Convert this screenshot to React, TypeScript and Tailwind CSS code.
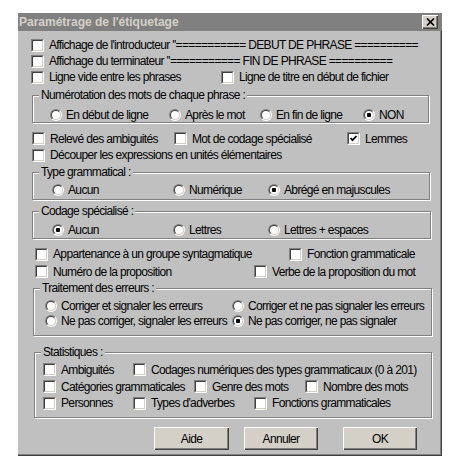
import type { ReactNode } from 'react'

function Box({ checked }: { checked?: boolean }) {
  return (
    <span className="block w-[13px] h-[13px] shrink-0 border border-t-[#808080] border-l-[#808080] border-b-white border-r-white">
      <span className="flex w-full h-full items-center justify-center bg-white border border-t-[#404040] border-l-[#404040] border-b-[#d4d0c8] border-r-[#d4d0c8]">
        {checked && (
          <svg width="9" height="9" viewBox="0 0 9 9">
            <polyline points="1.5,4 3.5,6.2 7.5,2" fill="none" stroke="#000" strokeWidth="1.8" />
          </svg>
        )}
      </span>
    </span>
  )
}

function Dot({ checked }: { checked?: boolean }) {
  return (
    <span className="block w-[12px] h-[12px] shrink-0 rounded-full border border-t-[#808080] border-l-[#808080] border-b-white border-r-white">
      <span className="flex w-full h-full items-center justify-center rounded-full bg-white border border-t-[#404040] border-l-[#404040] border-b-[#d4d0c8] border-r-[#d4d0c8]">
        {checked && <span className="block w-[4px] h-[4px] rounded-[1px] bg-black" />}
      </span>
    </span>
  )
}

function Check({ label, checked, className = '' }: { label: string; checked?: boolean; className?: string }) {
  return (
    <label className={'flex items-center gap-[5px] shrink-0 whitespace-nowrap ' + className}>
      <Box checked={checked} />
      <span>{label}</span>
    </label>
  )
}

function Radio({ label, checked, className = '' }: { label: string; checked?: boolean; className?: string }) {
  return (
    <label className={'flex items-center gap-[4px] shrink-0 whitespace-nowrap ' + className}>
      <Dot checked={checked} />
      <span>{label}</span>
    </label>
  )
}

function Group({ title, className, children }: { title: string; className: string; children: ReactNode }) {
  return (
    <div className={'relative border border-[#808080] shadow-[inset_1px_1px_0_#fff,1px_1px_0_#fff] ' + className}>
      <span className="absolute left-[6px] -top-[8px] px-[2px] bg-[#c0c0c0] leading-[14px] whitespace-nowrap">{title}</span>
      {children}
    </div>
  )
}

function Button({ children, className = '' }: { children: ReactNode; className?: string }) {
  return (
    <button className={'h-[23px] bg-[#d4d0c8] shadow-[inset_1px_1px_0_#fff,inset_-1px_-1px_0_#404040,inset_-2px_-2px_0_#808080] ' + className}>
      {children}
    </button>
  )
}

export default function App() {
  return (
    <div className="w-[450px] h-[476px] bg-white pt-[13px] pl-[18px] font-['Liberation_Sans',Arial,sans-serif] text-[12px] tracking-[-0.65px] text-black leading-[14px]">
      <div className="w-[424px] h-[443px] bg-[#c0c0c0] shadow-[inset_-1px_-1px_0_#404040,inset_-2px_-2px_0_#808080] flex flex-col">
        <div className="h-[18px] bg-[#808080] flex items-center justify-between pl-[1px] pr-[4px]">
          <span className="font-bold text-[#d4d0c8] tracking-normal">Paramétrage de l'étiquetage</span>
          <span className="w-[16px] h-[14px] bg-[#d4d0c8] flex items-center justify-center shadow-[inset_1px_1px_0_#fff,inset_-1px_-1px_0_#404040,inset_-2px_-2px_0_#808080]">
            <svg width="9" height="8" viewBox="0 0 9 8">
              <path d="M1 0.5 L8 7.5 M8 0.5 L1 7.5" stroke="#000" strokeWidth="1.7" />
            </svg>
          </span>
        </div>

        <div className="mt-[6px] pl-[13px] h-[16px] flex items-center">
          <Check label="Affichage de l'introducteur ''=========== DEBUT DE PHRASE ==========" />
        </div>
        <div className="pl-[13px] h-[16px] flex items-center">
          <Check label="Affichage du terminateur ''=========== FIN DE PHRASE ==========" />
        </div>
        <div className="pl-[13px] h-[16px] flex items-center">
          <Check label="Ligne vide entre les phrases" className="w-[190px]" />
          <Check label="Ligne de titre en début de fichier" />
        </div>

        <Group title="Numérotation des mots de chaque phrase :" className="mt-[10px] ml-[14px] mr-[13px] pt-[11px] pl-[17px]">
          <div className="h-[15px] flex items-center">
            <Radio label="En début de ligne" className="w-[119px]" />
            <Radio label="Après le mot" className="w-[91px]" />
            <Radio label="En fin de ligne" className="w-[103px]" />
            <Radio label="NON" checked />
          </div>
        </Group>

        <div className="mt-[7px] pl-[14px] h-[17px] flex items-center">
          <Check label="Relevé des ambiguités" className="w-[142px]" />
          <Check label="Mot de codage spécialisé" className="w-[173px]" />
          <Check label="Lemmes" checked />
        </div>
        <div className="pl-[14px] h-[16px] flex items-center">
          <Check label="Découper les expressions en unités élémentaires" />
        </div>

        <Group title="Type grammatical :" className="mt-[9px] ml-[14px] mr-[12px] pt-[9px] pb-[1px] pl-[19px]">
          <div className="h-[16px] flex items-center">
            <Radio label="Aucun" className="w-[121px]" />
            <Radio label="Numérique" className="w-[95px]" />
            <Radio label="Abrégé en majuscules" checked />
          </div>
        </Group>

        <Group title="Codage spécialisé :" className="mt-[11px] ml-[14px] mr-[11px] pt-[10px] pl-[19px]">
          <div className="h-[16px] flex items-center">
            <Radio label="Aucun" checked className="w-[121px]" />
            <Radio label="Lettres" className="w-[95px]" />
            <Radio label="Lettres + espaces" />
          </div>
        </Group>

        <div className="mt-[6px] pl-[17px] h-[18px] flex items-center">
          <Check label="Appartenance à un groupe syntagmatique" className="w-[254px]" />
          <Check label="Fonction grammaticale" />
        </div>
        <div className="pl-[17px] h-[17px] flex items-center">
          <Check label="Numéro de la proposition" className="w-[219px]" />
          <Check label="Verbe de la proposition du mot" />
        </div>

        <Group title="Traitement des erreurs :" className="mt-[8px] ml-[15px] mr-[10px] pt-[9px] pb-[7px] pl-[11px]">
          <div className="h-[15px] flex items-center">
            <Radio label="Corriger et signaler les erreurs" className="w-[187px]" />
            <Radio label="Corriger et ne pas signaler les erreurs" />
          </div>
          <div className="h-[15px] flex items-center">
            <Radio label="Ne pas corriger, signaler les erreurs" className="w-[187px]" />
            <Radio label="Ne pas corriger, ne pas signaler" checked />
          </div>
        </Group>

        <Group title="Statistiques :" className="mt-[16px] ml-[16px] mr-[10px] pt-[8px] pb-[6px] pl-[8px]">
          <div className="h-[17px] flex items-center">
            <Check label="Ambiguités" className="w-[90px]" />
            <Check label="Codages numériques des types grammaticaux (0 à 201)" />
          </div>
          <div className="h-[17px] flex items-center">
            <Check label="Catégories grammaticales" className="w-[151px]" />
            <Check label="Genre des mots" className="w-[111px]" />
            <Check label="Nombre des mots" />
          </div>
          <div className="h-[16px] flex items-center">
            <Check label="Personnes" className="w-[90px]" />
            <Check label="Types d'adverbes" className="w-[121px]" />
            <Check label="Fonctions grammaticales" />
          </div>
        </Group>

        <div className="mt-[9px] pr-[25px] flex justify-end">
          <Button className="w-[75px] mr-[15px]">Aide</Button>
          <Button className="w-[74px] mr-[25px]">Annuler</Button>
          <Button className="w-[74px]">OK</Button>
        </div>
      </div>
    </div>
  )
}
